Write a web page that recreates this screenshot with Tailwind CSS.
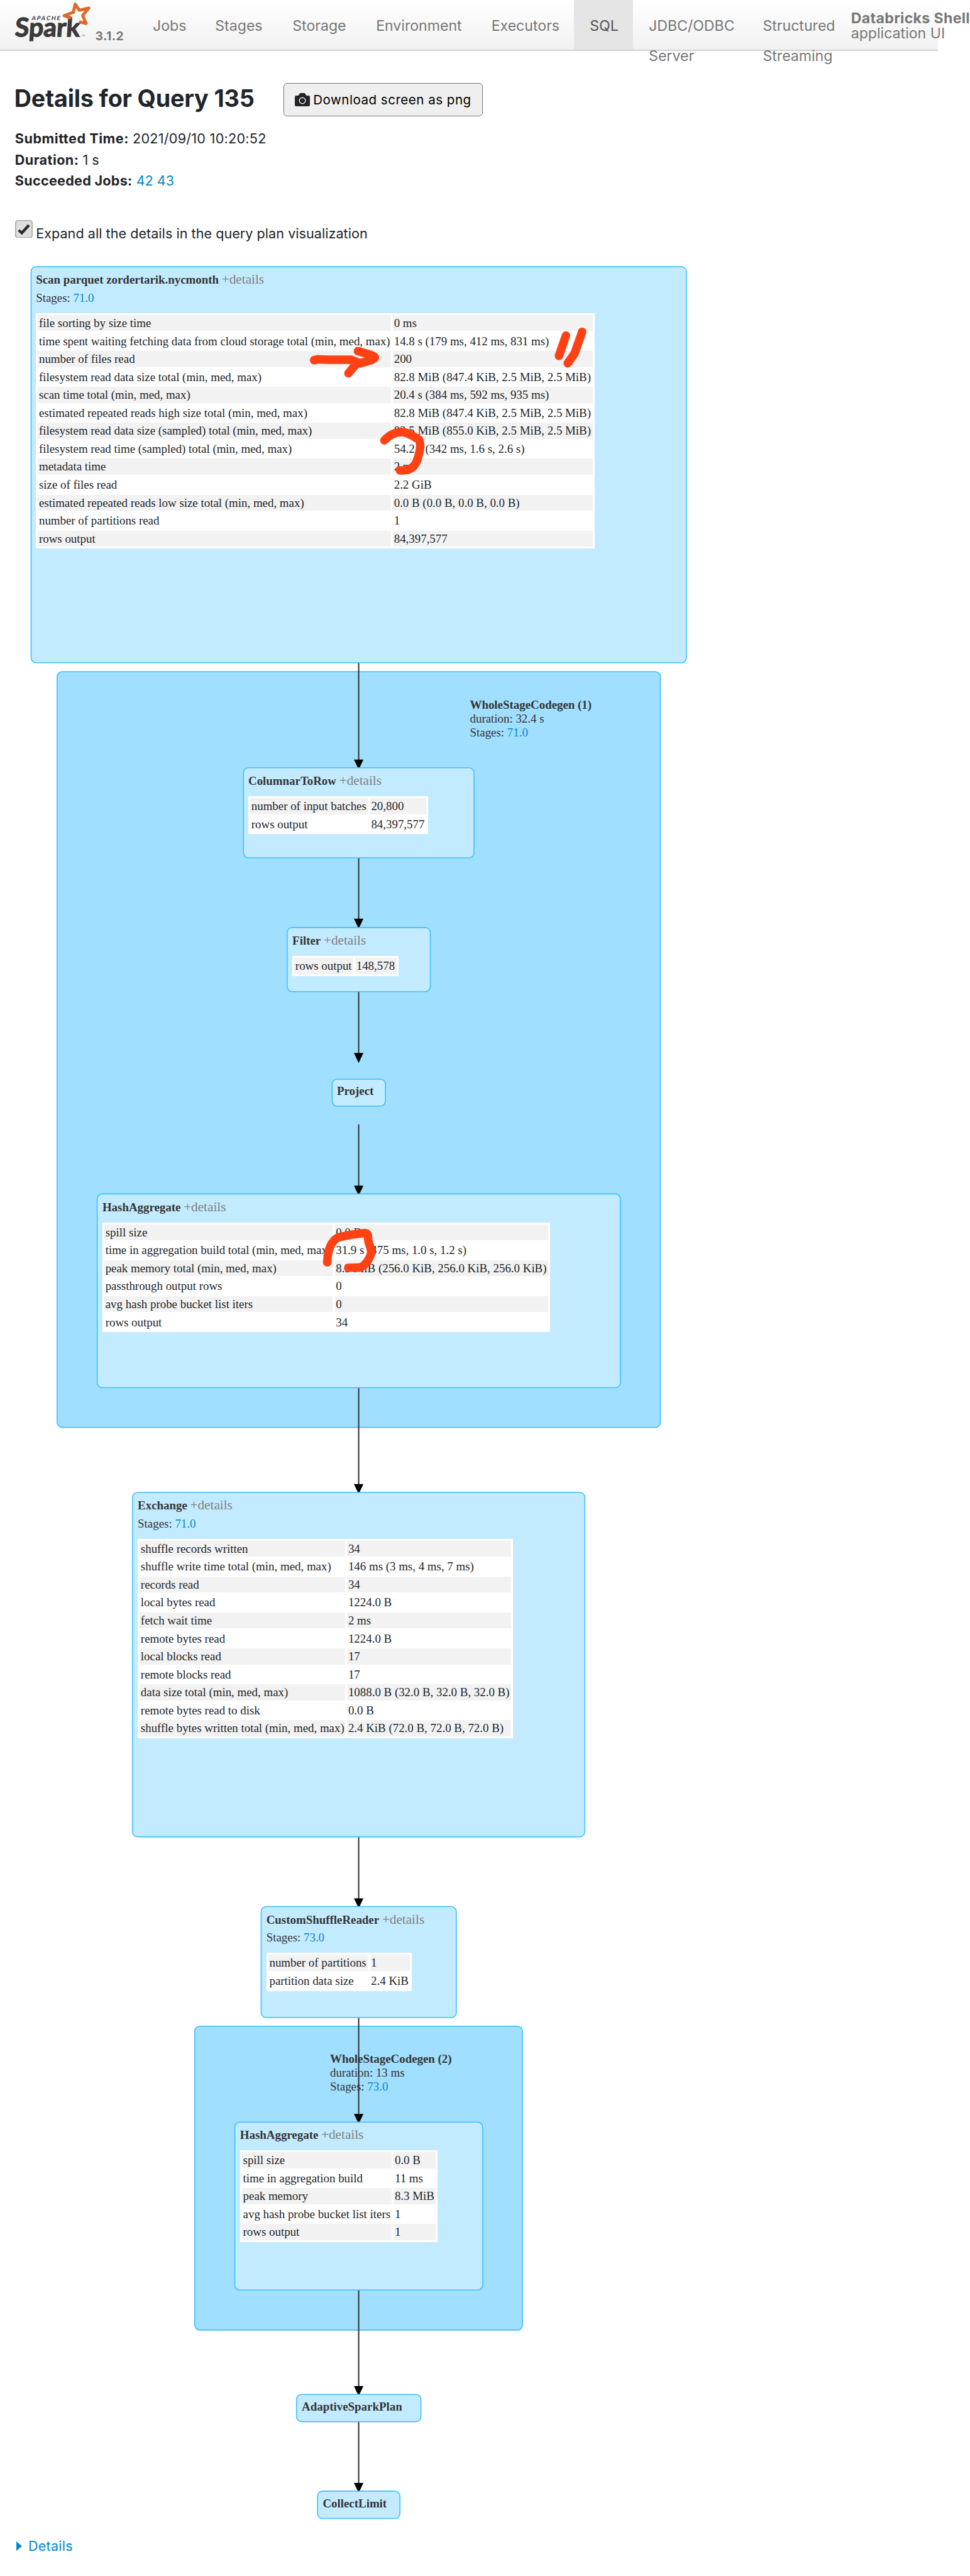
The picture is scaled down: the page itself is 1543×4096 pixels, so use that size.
<!DOCTYPE html>
<html lang="en">
<head>
<meta charset="utf-8">
<title>Details for Query 135</title>
<script src="https://cdn.jsdelivr.net/npm/@tailwindcss/browser@4"></script>
</head>
<body class="w-[1543px] h-[4096px] overflow-hidden bg-white font-['Inter',sans-serif] text-[#212529]">

<!-- Navigation bar -->
<header class="flex w-[1492px] h-[81px] border-b-2 border-[#d0d0d0] bg-linear-to-b from-white to-[#f1f1f1] text-[#777] whitespace-nowrap">
  <div class="flex w-[218.3px] shrink-0">
    <svg class="w-[147px] h-[79px] shrink-0" viewBox="0 0 185 99.5">
      <g transform="translate(29 73) skewX(-4)" fill="#3c3a3a" stroke="#3c3a3a">
        <text x="0" y="0" font-family="Lato" font-weight="700" font-size="52" textLength="130" lengthAdjust="spacingAndGlyphs" stroke-width="1.6">Spark</text>
      </g>
      <text transform="translate(63 40) skewX(-10)" font-family="Lato" font-weight="900" font-size="11.5" textLength="57" fill="#4a4848">APACHE</text>
      <text x="163" y="73" font-family="Lato" font-size="5" fill="#777">TM</text>
      <path d="M143 36 L128.500 31.500 L147 24.500 L150.500 8.500 L159 20.500 L178 16 L165.500 31 L172.500 47 L158.500 43.500" fill="none" stroke="#dd6a28" stroke-width="6.200" stroke-linejoin="round"/>
    </svg>
    <span class="mt-[43px] ml-[4.500px] text-[19.300px] leading-[28px] font-bold tracking-[0.400px]">3.1.2</span>
  </div>
  <nav class="flex shrink-0 text-[23.100px] leading-[47.800px] [&>a]:pt-[18.200px] [&>a]:pl-[24.700px] [&>a]:shrink-0">
    <a class="w-[99.300px]">Jobs</a>
    <a class="w-[123px]">Stages</a>
    <a class="w-[132.900px]">Storage</a>
    <a class="w-[183.500px]">Environment</a>
    <a class="w-[156.500px]">Executors</a>
    <a class="w-[93.900px] bg-[#e5e5e5] text-[#555]">SQL</a>
    <a class="w-[181.400px]">JDBC/ODBC<br>Server</a>
    <a class="w-[165px]">Structured<br>Streaming</a>
  </nav>
  <div class="pt-[16.900px] text-[23.100px] leading-[24px]"><b class="tracking-[0.350px]">Databricks Shell</b><br>application UI</div>
</header>

<!-- Query heading -->
<section class="mt-[51px] flex h-[53.300px] pl-[22.800px]">
  <h3 class="w-[428.200px] text-[37.700px] leading-[48px] font-bold tracking-[-0.150px] whitespace-nowrap">Details for Query 135</h3>
  <button class="flex w-[317.400px] items-center rounded-[6px] border-[1.500px] border-[#767676] bg-[#efefef] pl-[16.800px] text-black">
    <svg class="w-[24px] h-[21px] shrink-0" viewBox="0 0 24 21">
      <path d="M2 4H5.500L7.300 1.200Q8 0 9.300 0H14.700Q16 0 16.700 1.200L18.500 4H22Q24 4 24 6V19Q24 21 22 21H2Q0 21 0 19V6Q0 4 2 4Z" fill="#212529"/>
      <circle cx="12" cy="12" r="4.700" fill="none" stroke="#efefef" stroke-width="1.500"/>
    </svg>
    <span class="pt-[2px] pl-[5.500px] text-[20.500px] tracking-[0.520px] whitespace-nowrap">Download screen as png</span>
  </button>
</section>

<ul class="mt-[19px] pl-[23.800px] text-[21.550px] leading-[33.300px]">
  <li><b class="tracking-[0.550px]">Submitted Time:</b> <span class="tracking-[0.280px]">2021/09/10 10:20:52</span></li>
  <li><b class="tracking-[0.450px]">Duration:</b> 1 s</li>
  <li><b class="tracking-[0.300px]">Succeeded Jobs:</b> <span class="text-[#0088cc]">42 43</span></li>
</ul>

<label class="mt-[45.500px] flex h-[38.400px] pl-[23.600px] text-[21.550px] leading-[33.300px]">
  <svg class="w-[28px] h-[28.500px] shrink-0" viewBox="0 0 28 28.500">
    <rect x="0.800" y="0.800" width="26.400" height="26.900" rx="3.500" fill="#dedede" stroke="#a6a6a6" stroke-width="1.600"/>
    <path d="M5.800 16L10.700 20.500L22 8" fill="none" stroke="#2b2b2b" stroke-width="4.400"/>
  </svg>
  <span class="mt-[5px] ml-[5.600px] tracking-[0.050px]">Expand all the details in the query plan visualization</span>
</label>

<!-- Query plan graph -->
<main class="relative mt-[11.900px] h-[3631.600px] w-[1543px] font-['Liberation_Serif',serif] text-[18.900px] leading-[28.570px] text-[#333] whitespace-nowrap [&>div]:mt-[0.600px] [&>b]:mt-[0.600px]">

  <!-- Codegen clusters -->
  <svg class="absolute inset-0 w-[1543px] h-[3631.600px]" viewBox="0 504.100 1944.500 4576.700" fill="#a0dfff" stroke="#3ec0ff" stroke-width="2">
    <rect x="114.500" y="1346" width="1209.300" height="1514.300" rx="10"/>
    <rect x="390.300" y="4060.100" width="657.100" height="609" rx="10"/>
  </svg>

  <!-- Edges and operator boxes -->
  <svg class="absolute inset-0 w-[1543px] h-[3631.600px]" viewBox="0 504.100 1944.500 4576.700">
    <path d="M719 1328V1524M719 1719V1843M719 1987V2112M719 2253V2378M719 2781V2976M719 3681V3805M719 4043V4237M719 4589V4783M719 4853V4977" stroke="#333" stroke-width="2.600"/>
    <path d="M709.500 1522h19l-9.500 20zM709.500 1841h19l-9.500 20zM709.500 2110h19l-9.500 20zM709.500 2376h19l-9.500 20zM709.500 2974h19l-9.500 20zM709.500 3804h19l-9.500 20zM709.500 4236h19l-9.500 20zM709.500 4781.500h19l-9.500 20zM709.500 4975.500h19l-9.500 20z" fill="#000"/>
    <g fill="#c3ebff" stroke="#3ec0ff" stroke-width="2">
      <rect x="62.300" y="534.500" width="1313.700" height="793.500" rx="10"/>
      <rect x="488.100" y="1538.500" width="462.100" height="180.500" rx="10"/>
      <rect x="575.700" y="1858.700" width="286.900" height="128.300" rx="10"/>
      <rect x="665.700" y="2162.500" width="106.900" height="54" rx="10"/>
      <rect x="194.800" y="2392.400" width="1048.700" height="388.400" rx="10"/>
      <rect x="265.700" y="2990.500" width="906.700" height="690.200" rx="10"/>
      <rect x="523.500" y="3820.500" width="391.200" height="222.400" rx="10"/>
      <rect x="470.700" y="4252.400" width="496.800" height="336.400" rx="10"/>
      <rect x="594.400" y="4798" width="249.400" height="54.700" rx="10"/>
      <rect x="636.500" y="4992" width="165.200" height="54.700" rx="10"/>
    </g>
  </svg>

  <div class="absolute left-[57.200px] top-[30.800px]">
    <div class="h-[28.570px]"><b>Scan parquet zordertarik.nycmonth</b> <span class="text-[21.200px] leading-[20px] text-[#808080]">+details</span></div>
    <div class="h-[28.570px]">Stages: <a class="text-[#0088cc]">71.0</a></div>
    <div class="mt-[9.400px] grid w-max grid-cols-[561.600px_317.500px] auto-rows-[25.400px] gap-[3.170px] bg-white p-[3.170px] leading-[25.400px] text-[#212529] [&>p]:pl-[1.600px] [&>p:nth-child(4n+1)]:bg-[#f2f2f2] [&>p:nth-child(4n+2)]:bg-[#f2f2f2]">
      <p>file sorting by size time</p><p>0 ms</p>
      <p>time spent waiting fetching data from cloud storage total (min, med, max)</p><p>14.8 s (179 ms, 412 ms, 831 ms)</p>
      <p>number of files read</p><p>200</p>
      <p>filesystem read data size total (min, med, max)</p><p>82.8 MiB (847.4 KiB, 2.5 MiB, 2.5 MiB)</p>
      <p>scan time total (min, med, max)</p><p>20.4 s (384 ms, 592 ms, 935 ms)</p>
      <p>estimated repeated reads high size total (min, med, max)</p><p>82.8 MiB (847.4 KiB, 2.5 MiB, 2.5 MiB)</p>
      <p>filesystem read data size (sampled) total (min, med, max)</p><p>82.5 MiB (855.0 KiB, 2.5 MiB, 2.5 MiB)</p>
      <p>filesystem read time (sampled) total (min, med, max)</p><p>54.2 s (342 ms, 1.6 s, 2.6 s)</p>
      <p>metadata time</p><p>2 ms</p>
      <p>size of files read</p><p>2.2 GiB</p>
      <p>estimated repeated reads low size total (min, med, max)</p><p>0.0 B (0.0 B, 0.0 B, 0.0 B)</p>
      <p>number of partitions read</p><p>1</p>
      <p>rows output</p><p>84,397,577</p>
    </div>
  </div>

  <div class="absolute left-[747.500px] top-[709.300px] leading-[22.200px]">
    <b>WholeStageCodegen (1)</b><br>duration: 32.4 s<br>Stages: <a class="text-[#0088cc]">71.0</a>
  </div>

  <div class="absolute left-[395px] top-[827.500px]">
    <div class="h-[28.570px]"><b>ColumnarToRow</b> <span class="text-[21.200px] leading-[20px] text-[#808080]">+details</span></div>
    <div class="mt-[9.400px] grid w-max grid-cols-[187.500px_88.700px] auto-rows-[25.400px] gap-[3.170px] bg-white p-[3.170px] leading-[25.400px] text-[#212529] [&>p]:pl-[1.600px] [&>p:nth-child(4n+1)]:bg-[#f2f2f2] [&>p:nth-child(4n+2)]:bg-[#f2f2f2]">
      <p>number of input batches</p><p>20,800</p>
      <p>rows output</p><p>84,397,577</p>
    </div>
  </div>

  <div class="absolute left-[465.100px] top-[1081.600px]">
    <div class="h-[28.570px]"><b>Filter</b> <span class="text-[21.200px] leading-[20px] text-[#808080]">+details</span></div>
    <div class="mt-[9.400px] grid w-max grid-cols-[93.700px_65.600px] auto-rows-[25.400px] gap-[3.170px] bg-white p-[3.170px] leading-[25.400px] text-[#212529] [&>p]:pl-[1.600px] [&>p:nth-child(4n+1)]:bg-[#f2f2f2] [&>p:nth-child(4n+2)]:bg-[#f2f2f2]">
      <p>rows output</p><p>148,578</p>
    </div>
  </div>

  <b class="absolute left-[536px] top-[1320.900px]">Project</b>

  <div class="absolute left-[162.900px] top-[1505.100px]">
    <div class="h-[28.570px]"><b>HashAggregate</b> <span class="text-[21.200px] leading-[20px] text-[#808080]">+details</span></div>
    <div class="mt-[9.400px] grid w-max grid-cols-[363.400px_339.200px] auto-rows-[25.400px] gap-[3.170px] bg-white p-[3.170px] leading-[25.400px] text-[#212529] [&>p]:pl-[1.600px] [&>p:nth-child(4n+1)]:bg-[#f2f2f2] [&>p:nth-child(4n+2)]:bg-[#f2f2f2]">
      <p>spill size</p><p>0.0 B</p>
      <p>time in aggregation build total (min, med, max)</p><p>31.9 s (475 ms, 1.0 s, 1.2 s)</p>
      <p>peak memory total (min, med, max)</p><p>8.5 MiB (256.0 KiB, 256.0 KiB, 256.0 KiB)</p>
      <p>passthrough output rows</p><p>0</p>
      <p>avg hash probe bucket list iters</p><p>0</p>
      <p>rows output</p><p>34</p>
    </div>
  </div>

  <div class="absolute left-[219.100px] top-[1979.600px]">
    <div class="h-[28.570px]"><b>Exchange</b> <span class="text-[21.200px] leading-[20px] text-[#808080]">+details</span></div>
    <div class="h-[28.570px]">Stages: <a class="text-[#0088cc]">71.0</a></div>
    <div class="mt-[9.400px] grid w-max grid-cols-[326.900px_260.400px] auto-rows-[25.400px] gap-[3.170px] bg-white p-[3.170px] leading-[25.400px] text-[#212529] [&>p]:pl-[1.600px] [&>p:nth-child(4n+1)]:bg-[#f2f2f2] [&>p:nth-child(4n+2)]:bg-[#f2f2f2]">
      <p>shuffle records written</p><p>34</p>
      <p>shuffle write time total (min, med, max)</p><p>146 ms (3 ms, 4 ms, 7 ms)</p>
      <p>records read</p><p>34</p>
      <p>local bytes read</p><p>1224.0 B</p>
      <p>fetch wait time</p><p>2 ms</p>
      <p>remote bytes read</p><p>1224.0 B</p>
      <p>local blocks read</p><p>17</p>
      <p>remote blocks read</p><p>17</p>
      <p>data size total (min, med, max)</p><p>1088.0 B (32.0 B, 32.0 B, 32.0 B)</p>
      <p>remote bytes read to disk</p><p>0.0 B</p>
      <p>shuffle bytes written total (min, med, max)</p><p>2.4 KiB (72.0 B, 72.0 B, 72.0 B)</p>
    </div>
  </div>

  <div class="absolute left-[423.700px] top-[2638.200px]">
    <div class="h-[28.570px]"><b>CustomShuffleReader</b> <span class="text-[21.200px] leading-[20px] text-[#808080]">+details</span></div>
    <div class="h-[28.570px]">Stages: <a class="text-[#0088cc]">73.0</a></div>
    <div class="mt-[9.400px] grid w-max grid-cols-[158.500px_63.400px] auto-rows-[25.400px] gap-[3.170px] bg-white p-[3.170px] leading-[25.400px] text-[#212529] [&>p]:pl-[1.600px] [&>p:nth-child(4n+1)]:bg-[#f2f2f2] [&>p:nth-child(4n+2)]:bg-[#f2f2f2]">
      <p>number of partitions</p><p>1</p>
      <p>partition data size</p><p>2.4 KiB</p>
    </div>
  </div>

  <div class="absolute left-[525px] top-[2862.500px] leading-[22.200px]">
    <b>WholeStageCodegen (2)</b><br>duration: 13 ms<br>Stages: <a class="text-[#0088cc]">73.0</a>
  </div>

  <div class="absolute left-[381.800px] top-[2980.600px]">
    <div class="h-[28.570px]"><b>HashAggregate</b> <span class="text-[21.200px] leading-[20px] text-[#808080]">+details</span></div>
    <div class="mt-[9.400px] grid w-max grid-cols-[238.200px_66.700px] auto-rows-[25.400px] gap-[3.170px] bg-white p-[3.170px] leading-[25.400px] text-[#212529] [&>p]:pl-[1.600px] [&>p:nth-child(4n+1)]:bg-[#f2f2f2] [&>p:nth-child(4n+2)]:bg-[#f2f2f2]">
      <p>spill size</p><p>0.0 B</p>
      <p>time in aggregation build</p><p>11 ms</p>
      <p>peak memory</p><p>8.3 MiB</p>
      <p>avg hash probe bucket list iters</p><p>1</p>
      <p>rows output</p><p>1</p>
    </div>
  </div>

  <b class="absolute left-[480.100px] top-[3412.700px]">AdaptiveSparkPlan</b>
  <b class="absolute left-[513.400px] top-[3566.600px]">CollectLimit</b>

  <!-- Marker annotations -->
  <svg class="absolute inset-0 w-[1543px] h-[3631.600px]" viewBox="0 504.100 1944.500 4576.700" fill="none" stroke="#ff4114" stroke-width="17" stroke-linecap="round" stroke-linejoin="round">
    <path d="M629.700 721.700L637 720L660 721L704 721L722 728"/>
    <path d="M698.500 748L714 729.500L735 724.500Q752 719 751.500 716.500Q751 714 744 711.500L717.500 703.500"/>
    <path d="M1134.500 672.500L1120.500 713"/>
    <path d="M1167 665L1152 708L1138 728"/>
    <path d="M770.500 882.500C784 868 796 865.500 806 865.700C817 866 824 872 840 881C843 888 843 893 842 899C841 907 839 914 837 920C834 930 827 938 819 941C813 943 807 942.700 801.500 942.500"/>
    <path d="M656 2529.500C656 2512 661 2496 668 2488C674 2480 678 2479 690 2477C705 2474 722 2471 732 2471Q738.500 2471 738 2484C739 2494 744 2500 744 2508C744 2518 739 2523 736 2528C731 2534 728 2540 718 2540L698 2540.500"/>
  </svg>
</main>

<footer class="flex items-center pl-[26.300px] text-[21.550px] leading-[33.300px] text-[#0088cc]">
  <svg class="w-[9px] h-[15px]" viewBox="0 0 9 15"><path d="M0 0L9 7.500L0 15Z" fill="#0088cc"/></svg>
  <span class="ml-[9.700px] tracking-[0.250px]">Details</span>
</footer>
</body>
</html>
